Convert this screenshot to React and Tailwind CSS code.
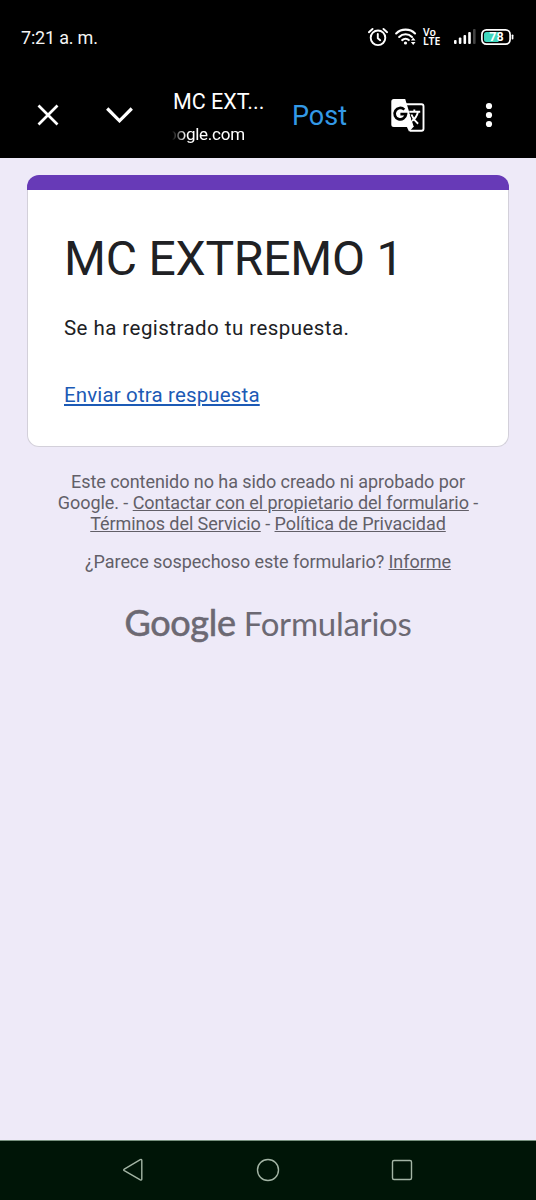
import React from 'react';

const AlarmIcon = () => (
  <svg width="20" height="20" viewBox="0 0 20 20" fill="none" stroke="#fff" strokeWidth="1.9" strokeLinecap="round" strokeLinejoin="round">
    <circle cx="10" cy="10.8" r="7.3" />
    <path d="M9.8 7v4.2l2.4 2" />
    <path d="M.9 5.2l3.6-3.2M19.1 5.2L15.5 2" />
  </svg>
);

const WifiIcon = () => (
  <svg width="22" height="18" viewBox="0 0 22 18" fill="none" stroke="#fff" strokeWidth="2.1" strokeLinecap="round">
    <path d="M1.2 5.4c5-5 13.8-5 18.8 0" />
    <path d="M4.2 8.9c3.6-3.5 9.2-3.5 12.8 0" />
    <path d="M7.2 12.1c2-1.8 4.8-1.8 6.6 0" />
    <circle cx="10.5" cy="15" r="1.6" fill="#fff" stroke="none" />
    <path d="M18.2 9.6l2.3 3h-4.6zM18.2 17l2.3-3h-4.6z" fill="#fff" stroke="none" />
  </svg>
);

const SignalIcon = () => (
  <svg width="22" height="15" viewBox="0 0 22 15" fill="#fff">
    <rect x="0" y="11" width="2.6" height="4" rx="1" />
    <rect x="4.8" y="8.5" width="2.6" height="6.5" rx="1" />
    <rect x="9.5" y="6" width="2.6" height="9" rx="1" />
    <rect x="14.2" y="3" width="2.6" height="12" rx="1" />
    <rect x="19" y="0" width="2.6" height="15" rx="1" fill="#444" />
  </svg>
);

const BatteryIcon = () => (
  <svg width="33" height="16" viewBox="0 0 33 16">
    <rect x="0.9" y="0.9" width="28.2" height="14.2" rx="4.5" fill="none" stroke="#fff" strokeWidth="1.7" />
    <path d="M5.5 3h12v10h-12A2.5 2.5 0 0 1 3 10.5v-5A2.5 2.5 0 0 1 5.500 3z" fill="#3fd6bd" />
    <rect x="30.7" y="5.5" width="1.7" height="5" rx="0.8" fill="#fff" />
    <text x="15.5" y="12.4" textAnchor="middle" fill="#fff" fontFamily="Roboto, sans-serif" fontSize="12.5" fontWeight="700">78</text>
  </svg>
);

const TranslateIcon = () => (
  <svg width="34" height="34" viewBox="0 0 34 34">
    <path d="M15 5.2h15.5a2 2 0 0 1 2 2v22.6a2 2 0 0 1-2 2H19" fill="none" stroke="#fff" strokeWidth="1.9" />
    <path d="M2.8 0h11.4l8.6 28h-20A2.5 2.5 0 0 1 .3 25.5v-23A2.5 2.5 0 0 1 2.8 0z" fill="#fff" />
    <path d="M15.7 27.5h7.1l-4.7 5.2z" fill="#fff" />
    <path d="M13.3 10.6a5.7 5.7 0 1 0 1.7 4.6H9.4" fill="none" stroke="#000" strokeWidth="2.7" />
    <path d="M18.4 12.8h10.9M23.3 10.5v2.3M27 12.8c-.9 4.2-3.2 7.2-6 9.2M20.4 15.5c1.2 3.5 3.6 6.5 6.7 9.3" fill="none" stroke="#000" strokeWidth="3.4" />
    <path d="M18.2 12.8h11M23.3 10.5v2.3M27 12.8c-.9 4.2-3.2 7.2-6 9.2M20.4 15.5c1.2 3.5 3.6 6.5 6.7 9.3" fill="none" stroke="#fff" strokeWidth="1.9" />
  </svg>
);

const BarraEstado = () => (
  <div className="flex h-[73px] items-center justify-between pl-[21px] pr-[22px]">
    <span className="mt-[2px] text-[18px] leading-[24px] tracking-[-0.2px] text-[#f4f4f4]">7:21 a. m.</span>
    <div className="flex items-center">
      <AlarmIcon />
      <div className="ml-[7px]"><WifiIcon /></div>
      <div className="ml-[6px] w-[18px] font-['Noto_Sans',sans-serif] text-[10.5px] font-semibold leading-[9px] text-white">
        <div>Vo</div>
        <div>LTE</div>
      </div>
      <div className="ml-[13px]"><SignalIcon /></div>
      <div className="ml-[5px]"><BatteryIcon /></div>
    </div>
  </div>
);

const BarraNavegador = () => (
  <div className="flex h-[85px] items-center">
    <button className="-mt-px ml-[37px]">
      <svg width="22" height="22" viewBox="0 0 22 22" fill="none" stroke="#fff" strokeWidth="2.7">
        <path d="M1.5 1.5l19 19M20.5 1.5l-19 19" />
      </svg>
    </button>
    <button className="-mt-px ml-[47px]">
      <svg width="27" height="16" viewBox="0 0 27 16" fill="none" stroke="#fff" strokeWidth="3.2">
        <path d="M1.2 1.5l12.3 12.3L25.8 1.5" />
      </svg>
    </button>
    <div className="ml-[40px] w-[94px] text-white">
      <div className="mt-[3px] whitespace-nowrap text-[21.5px] leading-[28px]">MC EXT...</div>
      {/* El dominio se desvanece por la izquierda */}
      <div className="-ml-[6px] mt-[6px] w-fit whitespace-nowrap text-[17px] leading-[24px] tracking-[-0.25px] [mask-image:linear-gradient(to_right,transparent_5px,white_19px)]">
        oogle.com
      </div>
    </div>
    <button className="ml-[25px] text-[27px] leading-[32px] text-[#3399e6]">Post</button>
    <button className="ml-[44px]"><TranslateIcon /></button>
    <button className="-mt-px ml-[60px]">
      <svg width="8" height="26" viewBox="0 0 8 26" fill="#fff">
        <circle cx="4" cy="4" r="3.1" />
        <circle cx="4" cy="13" r="3.1" />
        <circle cx="4" cy="22" r="3.1" />
      </svg>
    </button>
  </div>
);

const Formulario = () => (
  <main className="flex-1 bg-[#eeeaf8] px-[27px] pt-[17px]">
    <div className="overflow-hidden rounded-t-[12px]">
      <div className="h-[15px] bg-[#673ab7]" />
    </div>
    <div className="h-[257px] rounded-b-[12px] border border-t-0 border-[#d3d0da] bg-white px-[36px] pt-[39px]">
      <h1 className="whitespace-nowrap text-[48px] leading-[60px] tracking-[-0.2px] text-[#202124]">MC EXTREMO 1</h1>
      <p className="mt-[26px] text-[20.5px] leading-[26px] tracking-[0.45px] text-[#202124]">Se ha registrado tu respuesta.</p>
      <a className="mt-[41px] block w-fit text-[20.5px] leading-[26px] tracking-[0.15px] text-[#1c5ab5] underline">Enviar otra respuesta</a>
    </div>

    <div className="mt-[24px] whitespace-nowrap text-center text-[18px] leading-[21px] tracking-[-0.06px] text-[#625f68]">
      Este contenido no ha sido creado ni aprobado por<br />
      Google. - <a className="underline">Contactar con el propietario del formulario</a> -<br />
      <a className="underline">Términos del Servicio</a> - <a className="underline">Política de Privacidad</a>
    </div>
    <div className="mt-[17px] whitespace-nowrap text-center text-[18px] leading-[21px] tracking-[-0.06px] text-[#625f68]">
      ¿Parece sospechoso este formulario? <a className="underline">Informe</a>
    </div>

    <div className="mt-[30px] flex items-baseline justify-center whitespace-nowrap font-['Lato',sans-serif] leading-[40px] text-[#6c6973]">
      <span className="text-[36px] tracking-[-0.3px] [-webkit-text-stroke:0.6px_#6c6973]">Google</span>
      <span className="ml-[8px] text-[33px] tracking-[-0.25px]">Formularios</span>
    </div>
  </main>
);

const BarraSistema = () => (
  <nav className="flex h-[60px] items-center justify-between border-t border-[#78917f] bg-[#001507] px-[122px] pb-[1px]">
    <svg width="22" height="24" viewBox="0 0 22 24" fill="none" stroke="#a3b5a5" strokeWidth="1.4" strokeLinejoin="round">
      <path d="M2.3 11.1L18.3 1.7q1.5-.8 1.5.8v18.5q0 1.6-1.5.8L2.3 12.7q-1.2-.8 0-1.600z" />
    </svg>
    <svg className="ml-[2px]" width="24" height="24" viewBox="0 0 24 24" fill="none" stroke="#a3b5a5" strokeWidth="1.4">
      <circle cx="12" cy="12" r="10.5" />
    </svg>
    <svg width="24" height="24" viewBox="0 0 24 24" fill="none" stroke="#a3b5a5" strokeWidth="1.4">
      <rect x="2.5" y="2.5" width="19" height="19" rx="1.5" />
    </svg>
  </nav>
);

const App = () => {
  return (
    <div className="flex h-[1200px] w-[536px] flex-col overflow-hidden bg-black font-['Roboto',sans-serif]">
      <BarraEstado />
      <BarraNavegador />
      <Formulario />
      <BarraSistema />
    </div>
  );
};

export default App;
